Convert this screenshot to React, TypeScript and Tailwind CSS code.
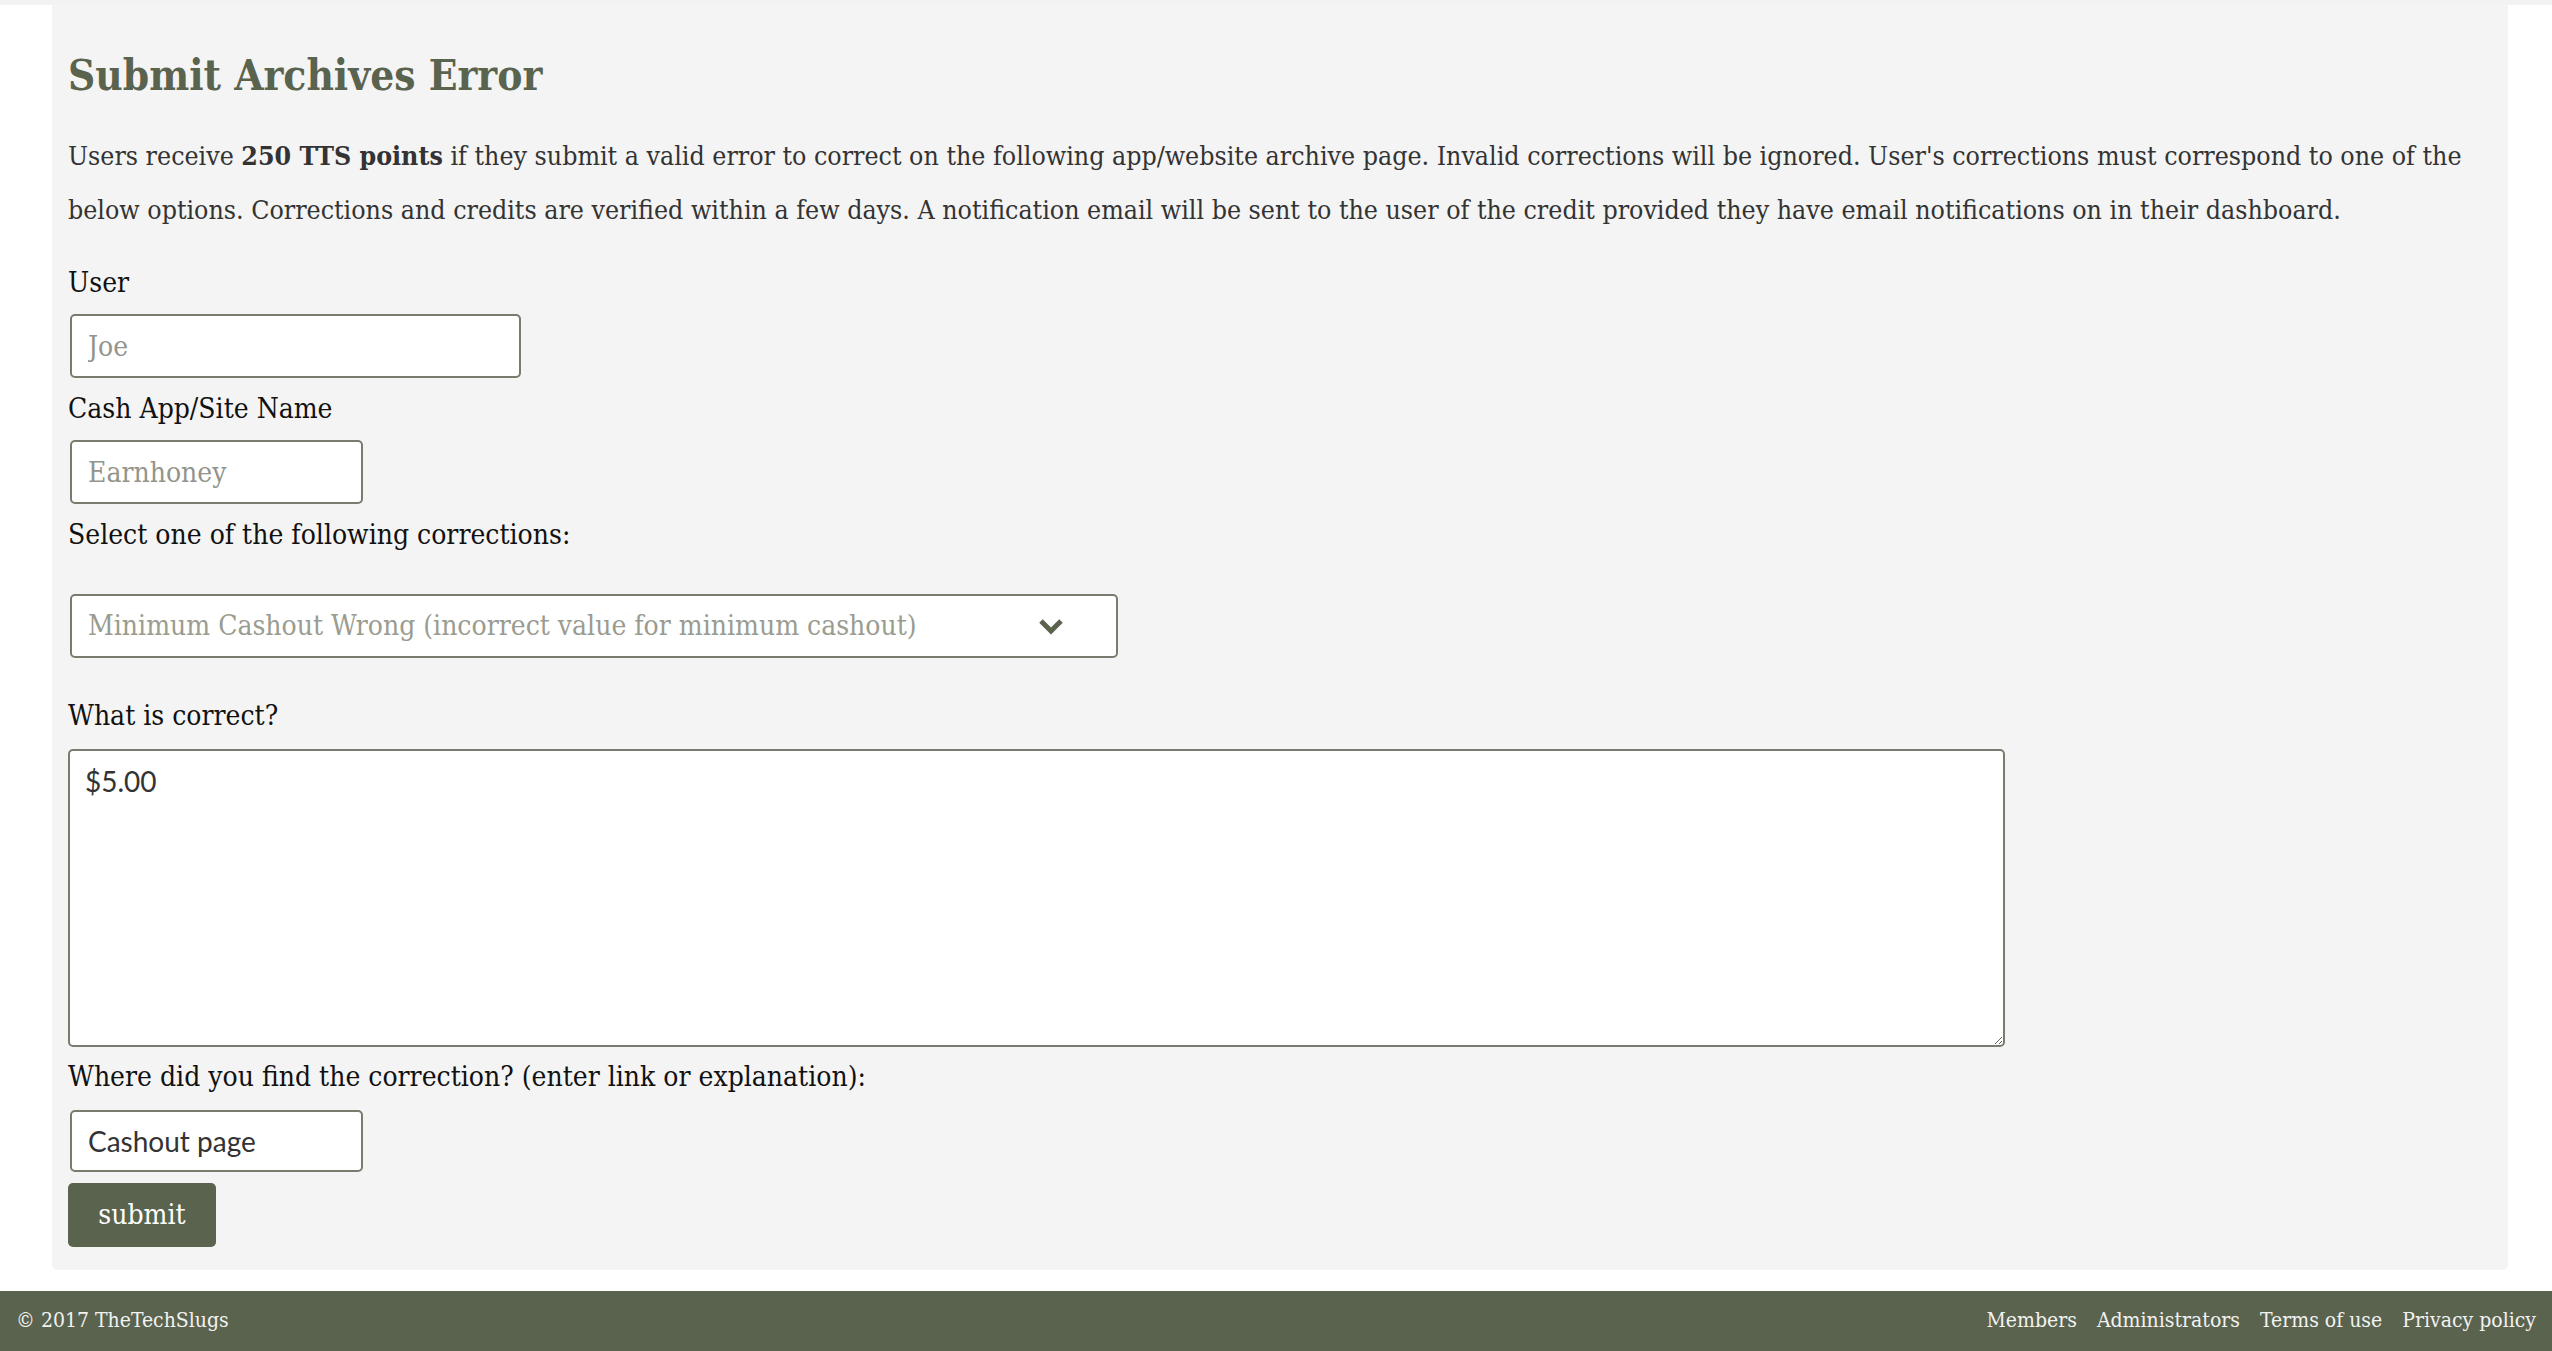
// App.tsx
// Submit Archives Error form page

import React from 'react';

const serif = "font-['DejaVu_Serif',serif] [font-stretch:condensed]";

const Label = ({ text, className = '' }: { text: string; className?: string }) => (
  <label className={`block text-[28px] leading-[42px] text-[#111] ${serif} ${className}`}>{text}</label>
);

const ChevronDown = () => (
  <svg width="28" height="20" viewBox="0 0 28 20" fill="none">
    <polyline points="4,5 14,15 24,5" stroke="#5a634e" strokeWidth="5" strokeLinejoin="miter" />
  </svg>
);

export default function App() {
  return (
    <div className="min-h-screen bg-white flex flex-col">
      {/* strip at the top */}
      <div className="h-[5px] bg-[#f2f2f2]" />

      {/* main panel */}
      <div className="ml-[52px] mr-[44px] bg-[#f4f4f4] rounded-b-[6px] pl-[16px] pr-[12px] pt-[43px] pb-[23px]">
        <h1 className={`text-[42px] leading-[56px] font-bold text-[#5a634e] ${serif}`}>
          Submit Archives Error
        </h1>

        <p className={`mt-[25px] text-[26.5px] leading-[54px] text-[#333] ${serif}`}>
          Users receive <b>250 TTS points</b> if they submit a valid error to correct on the following app/website
          archive page. Invalid corrections will be ignored. User's corrections must correspond to one of the
          <br />
          below options. Corrections and credits are verified within a few days. A notification email will be sent to
          the user of the credit provided they have email notifications on in their dashboard.
        </p>

        <form className="flex flex-col items-start" onSubmit={(e) => e.preventDefault()}>
          <Label text="User" className="mt-[25px]" />
          <input
            placeholder="Joe"
            className={`mt-[10px] ml-[2px] w-[451px] h-[64px] bg-white border-2 border-[#7a7b6e] rounded-[5px] px-[16px] text-[28px] text-[#333] placeholder:text-[#93958c] outline-none ${serif}`}
          />

          <Label text="Cash App/Site Name" className="mt-[10px]" />
          <input
            placeholder="Earnhoney"
            className={`mt-[10px] ml-[2px] w-[293px] h-[64px] bg-white border-2 border-[#7a7b6e] rounded-[5px] px-[16px] text-[28px] text-[#333] placeholder:text-[#93958c] outline-none ${serif}`}
          />

          <Label text="Select one of the following corrections:" className="mt-[10px]" />
          <div className="relative mt-[38px] ml-[2px]">
            <select
              defaultValue="min"
              className={`appearance-none w-[1048px] h-[64px] bg-white border-2 border-[#7a7b6e] rounded-[5px] px-[16px] text-[28px] text-[#9a9c90] outline-none ${serif}`}
            >
              <option value="min">Minimum Cashout Wrong (incorrect value for minimum cashout)</option>
              <option value="name">Name Wrong</option>
              <option value="other">Other</option>
            </select>
            <span className="absolute right-[53px] top-[22px] pointer-events-none">
              <ChevronDown />
            </span>
          </div>

          <Label text="What is correct?" className="mt-[37px]" />
          <textarea
            defaultValue="$5.00"
            className="mt-[12px] w-[1937px] h-[298px] bg-white border-2 border-[#7a7b6e] rounded-[5px] px-[15px] pt-[12px] text-[28px] leading-[36px] text-[#333] font-['Lato',sans-serif] outline-none"
          />

          <Label text="Where did you find the correction? (enter link or explanation):" className="mt-[9px]" />
          <input
            defaultValue="Cashout page"
            className="mt-[12px] ml-[2px] w-[293px] h-[62px] bg-white border-2 border-[#7a7b6e] rounded-[5px] px-[16px] text-[28px] text-[#333] font-['Lato',sans-serif] outline-none"
          />

          <button
            type="submit"
            className={`mt-[11px] w-[148px] h-[64px] bg-[#5a634e] text-white rounded-[5px] text-[28px] ${serif}`}
          >
            submit
          </button>
        </form>
      </div>

      {/* footer */}
      <footer className={`mt-[21px] h-[60px] bg-[#5a634e] flex items-center justify-between px-[16px] text-[21px] text-[#f2f2f2] ${serif}`}>
        <span>© 2017 TheTechSlugs</span>
        <nav className="flex gap-[20px]">
          <a href="#">Members</a>
          <a href="#">Administrators</a>
          <a href="#">Terms of use</a>
          <a href="#">Privacy policy</a>
        </nav>
      </footer>
    </div>
  );
}
